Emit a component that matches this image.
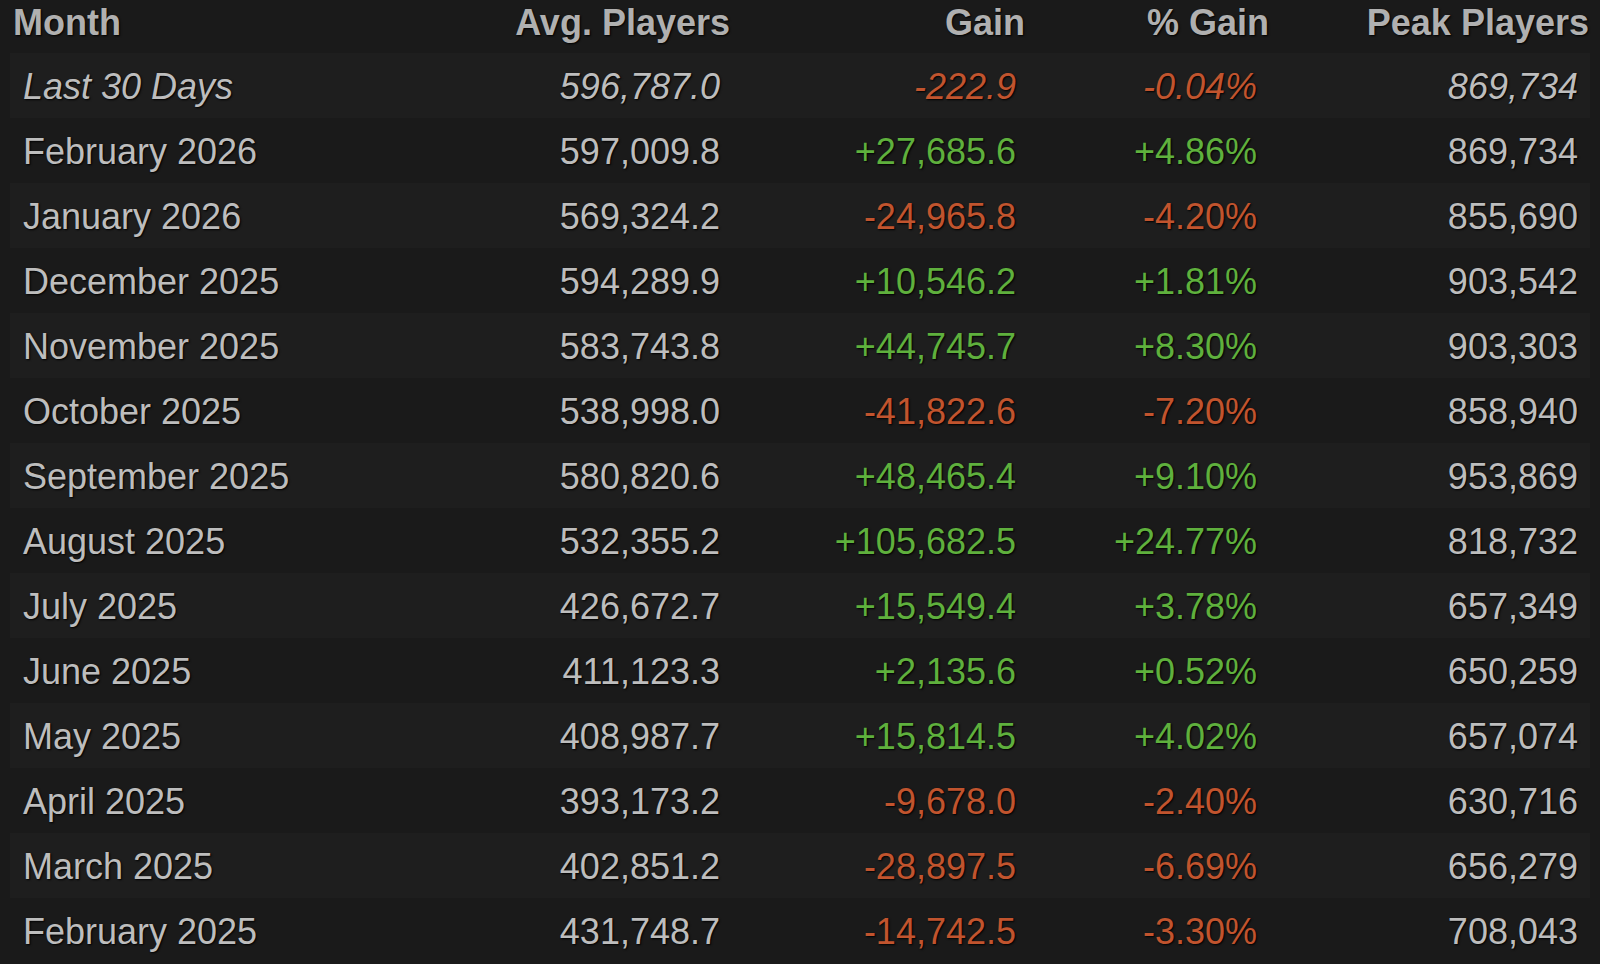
type Row = {
  month: string;
  avg: string;
  gain: string;
  pct: string;
  peak: string;
  italic?: boolean;
};

const rows: Row[] = [
  { month: "Last 30 Days", avg: "596,787.0", gain: "-222.9", pct: "-0.04%", peak: "869,734", italic: true },
  { month: "February 2026", avg: "597,009.8", gain: "+27,685.6", pct: "+4.86%", peak: "869,734" },
  { month: "January 2026", avg: "569,324.2", gain: "-24,965.8", pct: "-4.20%", peak: "855,690" },
  { month: "December 2025", avg: "594,289.9", gain: "+10,546.2", pct: "+1.81%", peak: "903,542" },
  { month: "November 2025", avg: "583,743.8", gain: "+44,745.7", pct: "+8.30%", peak: "903,303" },
  { month: "October 2025", avg: "538,998.0", gain: "-41,822.6", pct: "-7.20%", peak: "858,940" },
  { month: "September 2025", avg: "580,820.6", gain: "+48,465.4", pct: "+9.10%", peak: "953,869" },
  { month: "August 2025", avg: "532,355.2", gain: "+105,682.5", pct: "+24.77%", peak: "818,732" },
  { month: "July 2025", avg: "426,672.7", gain: "+15,549.4", pct: "+3.78%", peak: "657,349" },
  { month: "June 2025", avg: "411,123.3", gain: "+2,135.6", pct: "+0.52%", peak: "650,259" },
  { month: "May 2025", avg: "408,987.7", gain: "+15,814.5", pct: "+4.02%", peak: "657,074" },
  { month: "April 2025", avg: "393,173.2", gain: "-9,678.0", pct: "-2.40%", peak: "630,716" },
  { month: "March 2025", avg: "402,851.2", gain: "-28,897.5", pct: "-6.69%", peak: "656,279" },
  { month: "February 2025", avg: "431,748.7", gain: "-14,742.5", pct: "-3.30%", peak: "708,043" },
];

const cols = "grid grid-cols-[410px_310px_295px_244px_321px]";

function tone(v: string) {
  return v.startsWith("-") ? "text-[#c1542e]" : "text-[#5fb03d]";
}

export default function App() {
  return (
    <div
      className="w-[1600px] h-[964px] overflow-hidden bg-[#1a1a1a] px-[10px] text-[36px] [text-shadow:1px_1px_2px_#000]"
      style={{ fontFamily: '"Liberation Sans", Arial, sans-serif' }}
    >
      <div className={`${cols} h-[53px] leading-[45px] font-bold text-[#b0b0b0]`}>
        <div className="pl-[3px]">Month</div>
        <div className="text-right">Avg. Players</div>
        <div className="text-right">Gain</div>
        <div className="text-right">% Gain</div>
        <div className="text-right pr-[1px]">Peak Players</div>
      </div>

      {rows.map((r, i) => (
        <div
          key={r.month}
          className={`${cols} h-[65px] leading-[67px] text-[#bdbdbd] ${
            i % 2 === 0 ? "bg-[#1e1e1e]" : "bg-[#1a1a1a]"
          } ${r.italic ? "italic" : ""}`}
        >
          <div className="pl-[13px]">{r.month}</div>
          <div className="text-right pr-[10px]">{r.avg}</div>
          <div className={`text-right pr-[9px] ${tone(r.gain)}`}>{r.gain}</div>
          <div className={`text-right pr-[12px] ${tone(r.pct)}`}>{r.pct}</div>
          <div className="text-right pr-[12px]">{r.peak}</div>
        </div>
      ))}
    </div>
  );
}
